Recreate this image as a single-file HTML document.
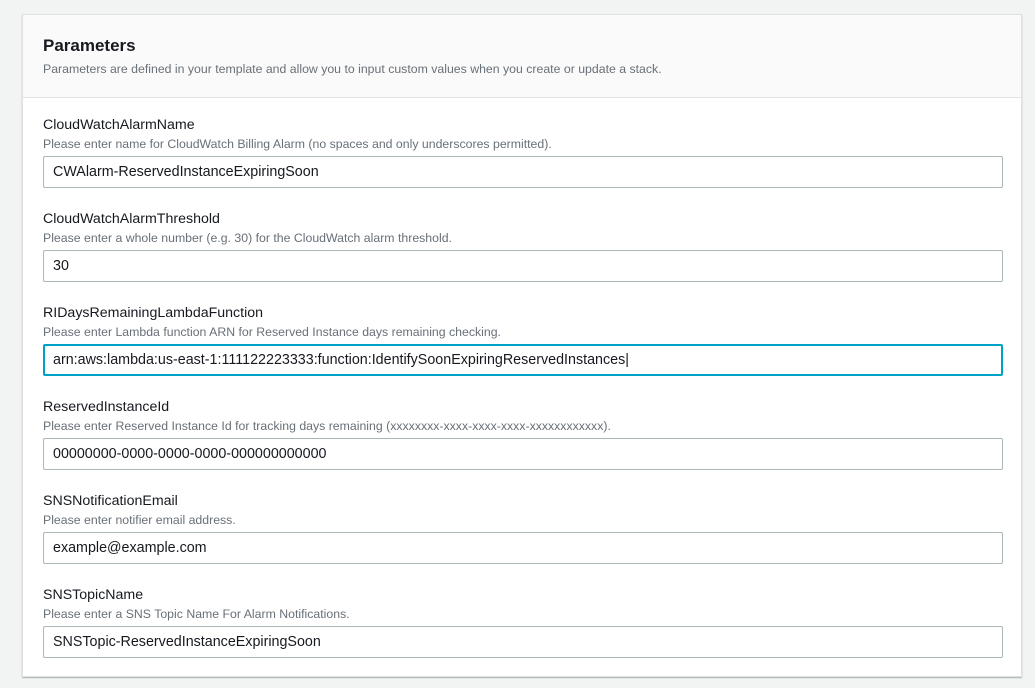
<!DOCTYPE html>
<html><head><style>
body{margin:0;width:1035px;height:688px;background:#f2f3f3;font-family:"Liberation Sans",sans-serif;overflow:hidden;position:relative}
.panel{position:absolute;left:22px;top:14px;width:1000px;height:663px;background:#fff;border:1px solid #e0e0e0;box-shadow:0 1px 1px rgba(0,28,36,.3);box-sizing:border-box}
.hdr{height:83px;background:#fafafa;border-bottom:1px solid #e3e3e3;box-sizing:border-box;padding:21px 20px 0}
.hdr h2{margin:0;font-size:17px;font-weight:bold;color:#16191f}
.hdr p{margin:6px 0 0;font-size:12.3px;color:#687078}
.f{position:absolute;left:20px;width:960px}
.l{font-size:14.2px;color:#16191f;height:18px}
.d{font-size:12.3px;color:#687078;margin-top:2px}
.i{position:absolute;top:39px;left:0;width:960px;height:32px;border:1px solid #aab7b8;box-sizing:border-box;padding:0 9px;line-height:30px;font-size:14.3px;color:#16191f;border-radius:2px}
.foc{border:2px solid #00a1c9;padding:0 8px;line-height:28px}
</style></head><body>
<div class="panel">
<div class="hdr"><h2>Parameters</h2><p>Parameters are defined in your template and allow you to input custom values when you create or update a stack.</p></div>
<div class="f" style="top:102px"><div class="l">CloudWatchAlarmName</div><div class="d">Please enter name for CloudWatch Billing Alarm (no spaces and only underscores permitted).</div><div class="i">CWAlarm-ReservedInstanceExpiringSoon</div></div>
<div class="f" style="top:196px"><div class="l">CloudWatchAlarmThreshold</div><div class="d">Please enter a whole number (e.g. 30) for the CloudWatch alarm threshold.</div><div class="i">30</div></div>
<div class="f" style="top:290px"><div class="l">RIDaysRemainingLambdaFunction</div><div class="d">Please enter Lambda function ARN for Reserved Instance days remaining checking.</div><div class="i foc">arn:aws:lambda:us-east-1:111122223333:function:IdentifySoonExpiringReservedInstances|</div></div>
<div class="f" style="top:384px"><div class="l">ReservedInstanceId</div><div class="d">Please enter Reserved Instance Id for tracking days remaining (xxxxxxxx-xxxx-xxxx-xxxx-xxxxxxxxxxxx).</div><div class="i">00000000-0000-0000-0000-000000000000</div></div>
<div class="f" style="top:478px"><div class="l">SNSNotificationEmail</div><div class="d">Please enter notifier email address.</div><div class="i">example@example.com</div></div>
<div class="f" style="top:572px"><div class="l">SNSTopicName</div><div class="d">Please enter a SNS Topic Name For Alarm Notifications.</div><div class="i">SNSTopic-ReservedInstanceExpiringSoon</div></div>
</div>
</body></html>
